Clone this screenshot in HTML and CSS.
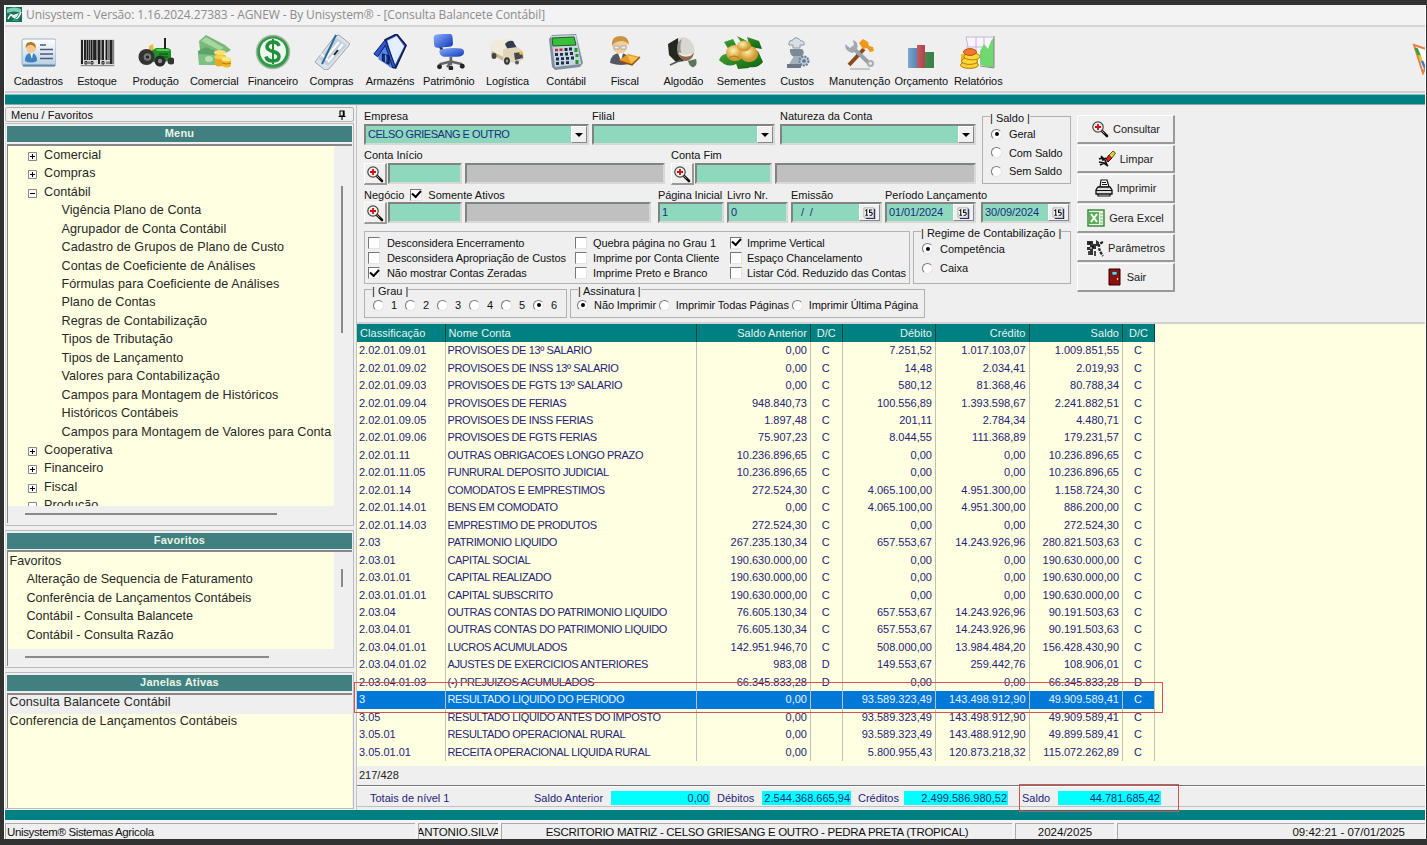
FILE: index.html
```html
<!DOCTYPE html>
<html lang="pt-BR">
<head>
<meta charset="utf-8">
<title>Unisystem - Consulta Balancete Contábil</title>
<link rel="stylesheet" href="styles.css">
</head>
<body>
<svg class="defs" width="0" height="0">
  <defs>
    <linearGradient id="gCard" x1="0" y1="0" x2="0" y2="1"><stop offset="0" stop-color="#ffffff"/><stop offset="1" stop-color="#b4d0e4"/></linearGradient>
    <linearGradient id="gBlue" x1="0" y1="0" x2="1" y2="1"><stop offset="0" stop-color="#8ab0ff"/><stop offset="1" stop-color="#1238b8"/></linearGradient>
    <radialGradient id="gGold" cx=".4" cy=".35"><stop offset="0" stop-color="#fff2b0"/><stop offset="1" stop-color="#d09a30"/></radialGradient>
    <linearGradient id="gLeaf" x1="0" y1="0" x2="1" y2="1"><stop offset="0" stop-color="#48a838"/><stop offset="1" stop-color="#0c6010"/></linearGradient>
    <linearGradient id="gBar" x1="0" y1="0" x2="1" y2="0"><stop offset="0" stop-color="#fff" stop-opacity=".35"/><stop offset="1" stop-color="#000" stop-opacity=".15"/></linearGradient>
    <symbol id="lens" viewBox="0 0 18 18"><path d="M11 11l5 5" stroke="#111" stroke-width="2.600" stroke-linecap="round"/><path d="M10.500 10.500l3 3" stroke="#b89860" stroke-width="1"/><circle cx="7" cy="7" r="5.200" fill="#f6eeee" stroke="#444" stroke-width="1.200"/><path d="M7 4v6M4 7h6" stroke="#d01010" stroke-width="1.800"/></symbol>
    <symbol id="cal" viewBox="0 0 14 13"><path d="M12.500 2v10.500H3" fill="none" stroke="#223070" stroke-width="1.400"/><path d="M1 1h10.500v10H1z" fill="#fff" stroke="#888" stroke-width=".7"/><path d="M2.500 4l1.500-1v6M2.500 9h3M10 3.300H7v2.500h2q1 .2 1 1.500t-1 1.700H7" fill="none" stroke="#111" stroke-width="1.200"/></symbol>
    <symbol id="plus" viewBox="0 0 9 9"><path d="M.5.5h8v8h-8z" fill="#fff" stroke="#888"/><path d="M2 4.500h5M4.500 2v5" stroke="#000"/></symbol>
    <symbol id="minus" viewBox="0 0 9 9"><path d="M.5.5h8v8h-8z" fill="#fff" stroke="#888"/><path d="M2 4.500h5" stroke="#000"/></symbol>
  </defs>
</svg>

<div class="window">
  <header class="titlebar">
    <svg class="app-icon" viewBox="0 0 16 15"><path d="M0 0h16v15H0z" fill="#16705c"/><path d="M1 2q7-3 14 0v4q-7-3-14 0z" fill="#7fd0b0"/><path d="M2 12q3-7 6-2t7-5" fill="none" stroke="#fff" stroke-width="1.500"/><path d="M3 6l4 2 6-2-2 4-4 1z" fill="#d8f4e8"/><path d="M9 11l5 3H6z" fill="#2ca05c"/></svg>
    <span>Unisystem - Versão: 1.16.2024.27383 - AGNEW - By Unisystem® - [Consulta Balancete Contábil]</span>
  </header>

  <nav class="toolbar">
    <div class="tool"><svg viewBox="0 0 36 36"><rect x="2" y="5" width="34" height="27" rx="2" fill="url(#gCard)" stroke="#9ab4c8"/><path d="M3 31.500h32" stroke="#6088a8" stroke-width="2"/><path d="M5 27q0-8 6-8t6 8q-6 3-12 0z" fill="#3c80c0"/><path d="M10 19l3 0-1 6z" fill="#fff"/><circle cx="11" cy="14" r="5" fill="#f4c890"/><path d="M5.500 14q0-7 6-6 5 1 4 6-3-4-6-3-2 0-4 3z" fill="#b87820"/><path d="M20 11h6M20 15.500h13M20 20h13M20 24.500h13" stroke="#557" stroke-width="1.600"/></svg><span>Cadastros</span></div>
    <div class="tool"><svg viewBox="0 0 36 36"><path d="M1 5h35v28H1z" fill="#dcdcdc"/><path d="M3 6v24M6 6v20M8.500 6v20M12.500 6v20M16 6v20M20 6v24M24 6v20M27.500 6v20M32 6v24" stroke="#1a1a1a" stroke-width="1.900"/><path d="M10.500 6v20M14.500 6v20M18 6v20M22 6v20M30 6v20M34 6v24" stroke="#333" stroke-width="1.100"/><path d="M6 30v-2.500h2V30zM10 27.500V30M12 30v-2.500h2V30zM23 30v-2.500h2V30zM28 27.500V30M30 27.500V30" fill="none" stroke="#222"/><path d="M2 31.500h33" stroke="#888"/></svg><span>Estoque</span></div>
    <div class="tool"><svg viewBox="0 0 36 36"><path d="M11 12l4-2 1 7-5 2z" fill="#e8b840"/><path d="M12 18l6-4h12l3 2v9l-6 3H15z" fill="#1f8f2a"/><path d="M18 15h12l2 2H19z" fill="#58c850"/><path d="M21 20h9M21 23h9" stroke="#0a5010"/><path d="M27 15V4" stroke="#222" stroke-width="2"/><circle cx="8.500" cy="23" r="8" fill="#333"/><circle cx="9.500" cy="23" r="3.800" fill="#777"/><circle cx="9.500" cy="23" r="1.600" fill="#222"/><circle cx="22" cy="27" r="5.500" fill="#2a2a2a"/><circle cx="22" cy="27" r="2.200" fill="#888"/><circle cx="33" cy="27" r="3.500" fill="#333"/></svg><span>Produção</span></div>
    <div class="tool"><svg viewBox="0 0 36 36"><path d="M3 7l7-6 19 10 6 5-7 4L4 16z" fill="#78b878"/><path d="M5 7l5-4 18 11-5 2z" fill="#a8d8a0"/><path d="M2 17l8-4 20 9-7 9H3z" fill="#5aa468"/><path d="M3 20l16 1v10H3z" fill="#7cc084"/><ellipse cx="13" cy="25" rx="4" ry="3" fill="#b8e0b0"/><path d="M19 18v13q4 3 8 0V18z" fill="#e8a820"/><path d="M26 24v8q5 3 9 0v-8z" fill="#f0b828"/><ellipse cx="24" cy="18.500" rx="6" ry="2.600" fill="#fce070"/><ellipse cx="24" cy="23" rx="6" ry="2.200" fill="#f8d050"/><ellipse cx="30.500" cy="25" rx="5" ry="2.300" fill="#fde880"/><path d="M26 29q5 2 9 0" stroke="#b07810" fill="none"/></svg><span>Comercial</span></div>
    <div class="tool"><svg viewBox="0 0 36 36"><circle cx="18" cy="18" r="16.500" fill="#2f9a48" stroke="#a0b8a0" stroke-width="1.500"/><circle cx="18" cy="17.500" r="13" fill="#f0f6f0"/><path d="M24 12q-1-4-6-4t-6 4.500q0 3.500 6 5t6 5q0 4.500-6 4.500t-7-4.500" fill="none" stroke="#20903a" stroke-width="3.500"/><path d="M18 5v25" stroke="#20903a" stroke-width="2"/></svg><span>Financeiro</span></div>
    <div class="tool"><svg viewBox="0 0 36 36"><path d="M1 28L21 2l4-1 11 9-21 25-4 1z" fill="#dce4ea" stroke="#9aa6b0"/><path d="M5 25L23 4l10 7-19 21z" fill="#c4d0d8"/><path d="M10 26l15-18M14 28l15-18M7 20l7 6" stroke="#f8fbfd" stroke-width="2"/><path d="M22 1L8 30" stroke="#2f6c98" stroke-width="2"/><path d="M20 21l4-5" stroke="#222" stroke-width="2"/></svg><span>Compras</span></div>
    <div class="tool"><svg viewBox="0 0 36 38"><path d="M13 6L25 0l10 12-11 24-6-2z" fill="#2450c8" stroke="#101840" stroke-width="1.600"/><path d="M15 7l10-5 8 11-10 20z" fill="#e4eefc"/><path d="M13 7l9 26-2 3-14-9-1-9z" fill="#5088f0"/><path d="M13 6L1 21l4 3 8-12 8 24 3-1z" fill="#2a58d8" stroke="#101840"/><path d="M10 21l7 2v9l-7-4z" fill="#123090" stroke="#0a1030"/><path d="M13.500 22v8" stroke="#a8c8ff"/></svg><span>Armazéns</span></div>
    <div class="tool"><svg viewBox="0 0 36 38"><path d="M8 12l5 9" stroke="#303848" stroke-width="3"/><rect x="2" y="0" width="20" height="14" rx="4" transform="rotate(-4 12 7)" fill="url(#gBlue)"/><path d="M8 17q8-3 20-2 6 0 6 4 0 5-8 5H12q-5-2-4-7z" fill="url(#gBlue)"/><path d="M20 24v9M20 29L8 32M20 29l12 3M20 30l-4 5" stroke="#666" stroke-width="2.800"/><circle cx="8" cy="34.500" r="2.600" fill="#222"/><circle cx="20" cy="36" r="2.500" fill="#222"/><circle cx="32" cy="34" r="2.600" fill="#222"/></svg><span>Patrimônio</span></div>
    <div class="tool"><svg viewBox="0 0 36 36"><path d="M1 12q0-4 5-6l14-1 4 2v19l-8 2L2 20z" fill="#f0ead8"/><path d="M3 17l13 7v4L2 20z" fill="#c8b890"/><path d="M16 10q3-4 8-3l4 7-9 2z" fill="#303c50"/><path d="M14 15l14-2 6 4 1 8-8 4-13-2z" fill="#e0d6bc"/><path d="M25 19l8-1 1 6-8 2z" fill="#45474c"/><ellipse cx="5" cy="22" rx="2.500" ry="3" fill="#444"/><ellipse cx="18" cy="27" rx="3" ry="3.700" fill="#333"/><ellipse cx="18" cy="27" rx="1.300" ry="1.700" fill="#999"/><circle cx="28" cy="28.500" r="2" fill="#555"/><circle cx="32" cy="19" r="1.800" fill="#fac040"/></svg><span>Logística</span></div>
    <div class="tool"><svg viewBox="0 0 36 36"><path d="M4 1l24-1 7 29-3 4-25 3-3-3L1 5z" fill="#8090a0"/><path d="M3 2l25-1 5 29-26 3z" fill="#c8d4e0"/><path d="M4 4l22-1 2 8-23 1z" fill="#38c038" stroke="#186020"/><path d="M7 16h3M11.500 15.800h3" stroke="#c03030" stroke-width="2.500"/><path d="M16.500 15.500h3M21 15h3M7 20.500h3M12 20.300h3M17 20h3M22 19.500h3M8 25h3M13 24.700h3M18 24.300h3M23 24h3M8 29.500h3M13 29h3M18 28.700h3" stroke="#1e2c48" stroke-width="2.800"/><path d="M28 14v4M29 20v3M29 26v4" stroke="#209830" stroke-width="3"/></svg><span>Contábil</span></div>
    <div class="tool"><svg viewBox="0 0 36 36"><path d="M3 29q1-10 10-10t11 10q-9 4-21 0z" fill="#505868"/><path d="M11 19h5l-2 8z" fill="#fff"/><circle cx="13" cy="12" r="7.500" fill="#f4cc9c"/><path d="M5 12q-1-10 8-10t9 9q-3-4-7-4-7 0-10 5z" fill="#c89440"/><path d="M7 12h5v3H7zM14 12h5v3h-5z" fill="#e8f0f4" stroke="#a0a0a0" stroke-width=".8"/><path d="M12 26l9-6 12 3-8 8z" fill="#e89820"/><path d="M20 21l12 3-8 5" fill="#f8c050"/><path d="M12 27l13 4 8-8" fill="none" stroke="#8c5010" stroke-width="1.400"/></svg><span>Fiscal</span></div>
    <div class="tool"><svg viewBox="0 0 36 36"><path d="M3 10l10-6 7 23-9 1-7-7z" fill="#25281f"/><path d="M13 5q6-4 12 1 6 7 4 14-3 8-10 7-6-5-6-22z" fill="#d8d8d0"/><path d="M17 5q-4 10 2 21-7-3-7-11t5-10z" fill="#9a9a92"/><path d="M13 17q7 8 16 2-2 8-9 8-5-1-7-10z" fill="#8c6a4c"/><path d="M14 19q6 5 13 1" fill="none" stroke="#f0e8d8" stroke-width="2"/><path d="M16 26L5 31" stroke="#555" stroke-width="1.500"/><path d="M23 27l8-2q2 5-2 8-4 1-6-6z" fill="#5c7458"/></svg><span>Algodão</span></div>
    <div class="tool tool-seeds"><svg viewBox="0 0 44 36"><path d="M5 8l9-3 4 8-8 3zM18 2l10 5-2 7zM28 3l12 4 3 8-12-2z" fill="url(#gLeaf)"/><path d="M0 26q3-8 14-6l6 8q-10 8-20-2zM15 24l13-5 2 15-11 1zM26 24l13-7 5 11q-6 8-18 4z" fill="url(#gLeaf)"/><ellipse cx="16" cy="19" rx="9" ry="8" fill="url(#gGold)"/><ellipse cx="30" cy="20" rx="9" ry="8" fill="url(#gGold)"/><ellipse cx="25" cy="12" rx="7" ry="5.500" fill="url(#gGold)"/><path d="M10 24q5-4 10 0" stroke="#a87020" fill="none"/></svg><span>Sementes</span></div>
    <div class="tool tool-costs"><svg viewBox="0 0 36 36"><path d="M10 9q0-3 4-3 1-3 4-2t4 3q4 0 3 4h-4v3h-7v-3h-4z" fill="#d8dfe4" stroke="#8c98a4"/><path d="M11 15h12q4 4-1 8h-7q-5-3-4-8z" fill="#7c8a98"/><path d="M15 22h7l3 10H9z" fill="#a4b0bc"/><path d="M8 30h14v4H8z" fill="#6c7884"/><circle cx="25" cy="27" r="4.500" fill="#c0cad4" stroke="#6c7c8c" stroke-width="2" stroke-dasharray="2 1"/><circle cx="25" cy="27" r="1.800" fill="#3878b8"/></svg><span>Custos</span></div>
    <div class="tool tool-maint"><svg viewBox="0 0 36 36"><path d="M8 35h20" stroke="#c8c8c8" stroke-width="2"/><path d="M7 31L22 15" stroke="#8a4a1c" stroke-width="4"/><path d="M17 9l4-4 5 3 1 4 4 1 1 4-4 1-3-4-4 1z" fill="#f0981c"/><path d="M10 13l18 17" stroke="#98a0a8" stroke-width="3.800"/><circle cx="28.500" cy="29.500" r="3.600" fill="#a8b0b6"/><circle cx="28.500" cy="29.500" r="1.400" fill="#eee"/><path d="M3 10l5 4 4-3-1-5q6 2 4 9l-4 4q-8-1-8-9z" fill="#a0a8b0"/></svg><span>Manutenção</span></div>
    <div class="tool tool-budget"><svg viewBox="0 0 36 36"><path d="M5 14h9v20H5z" fill="#3878b8"/><path d="M14 11h8v23h-8z" fill="#c84048"/><path d="M22 18h9v16h-9z" fill="#409850"/><path d="M5 14h9v20H5zM14 11h8v23h-8zM22 18h9v16h-9z" fill="url(#gBar)"/></svg><span>Orçamento</span></div>
    <div class="tool tool-reports"><svg viewBox="0 0 36 36"><path d="M6 3h27v30H14z" fill="#f8f6fc"/><path d="M6 3h27M6 3l2 10M16 3v20M24 3v10M6 13h20" stroke="#c4b4dc"/><path d="M20 17l4-7 4 5 3-8 3-4v31l-14-3z" fill="#70d870"/><path d="M34 2v32l-14-2" stroke="#888" fill="none"/><path d="M1 20v11q9 6 17 0V20z" fill="#f0b818"/><ellipse cx="9.500" cy="31" rx="9" ry="3.400" fill="#f8d030" stroke="#b87c08"/><ellipse cx="9.500" cy="27" rx="8" ry="3.400" fill="#ffd838" stroke="#b87c08"/><ellipse cx="12" cy="22.500" rx="8" ry="3.400" fill="#ffd838" stroke="#b87c08"/><ellipse cx="10" cy="18" rx="6.500" ry="3.400" fill="#f07830" stroke="#b85008"/></svg><span>Relatórios</span></div>
    <svg class="tool-cut" viewBox="0 0 13 32"><path d="M2 2L20 8 11 30z" fill="#fff" stroke="#e88040" stroke-width="2"/><path d="M4 5l4 9" stroke="#38a040" stroke-width="3"/><path d="M7 12l3 7" stroke="#e8c020" stroke-width="2.500"/><path d="M10 18l3 7" stroke="#3880d0" stroke-width="2.500"/></svg>
  </nav>
  <div class="teal-band"></div>

  <main class="workspace">
    <aside class="sidebar">
      <div class="dock-title"><span>Menu / Favoritos</span><svg viewBox="0 0 8 10"><path d="M2 1h4v5H2zM.5 6.500h7M4 7v3" fill="none" stroke="#000" stroke-width="1.100"/><path d="M5.500 1v5" stroke="#000" stroke-width="1.500"/></svg></div>

      <section class="panel panel-menu">
        <h2>Menu</h2>
        <div class="list-frame">
          <ul class="tree">
            <li><svg><use href="#plus"/></svg>Comercial</li>
            <li><svg><use href="#plus"/></svg>Compras</li>
            <li><svg><use href="#minus"/></svg>Contábil</li>
            <li class="leaf">Vigência Plano de Conta</li>
            <li class="leaf">Agrupador de Conta Contábil</li>
            <li class="leaf">Cadastro de Grupos de Plano de Custo</li>
            <li class="leaf">Contas de Coeficiente de Análises</li>
            <li class="leaf">Fórmulas para Coeficiente de Análises</li>
            <li class="leaf">Plano de Contas</li>
            <li class="leaf">Regras de Contabilização</li>
            <li class="leaf">Tipos de Tributação</li>
            <li class="leaf">Tipos de Lançamento</li>
            <li class="leaf">Valores para Contabilização</li>
            <li class="leaf">Campos para Montagem de Históricos</li>
            <li class="leaf">Históricos Contábeis</li>
            <li class="leaf">Campos para Montagem de Valores para Conta</li>
            <li><svg><use href="#plus"/></svg>Cooperativa</li>
            <li><svg><use href="#plus"/></svg>Financeiro</li>
            <li><svg><use href="#plus"/></svg>Fiscal</li>
            <li><svg><use href="#minus"/></svg>Produção</li>
          </ul>
          <div class="vscroll"><i></i></div>
          <div class="hscroll"><i></i></div>
        </div>
      </section>

      <section class="panel panel-fav">
        <h2>Favoritos</h2>
        <div class="list-frame">
          <ul class="tree fav">
            <li>Favoritos</li>
            <li class="leaf">Alteração de Sequencia de Faturamento</li>
            <li class="leaf">Conferência de Lançamentos Contábeis</li>
            <li class="leaf">Contábil - Consulta Balancete</li>
            <li class="leaf">Contábil - Consulta Razão</li>
          </ul>
          <div class="vscroll"><i></i></div>
          <div class="hscroll"><i></i></div>
        </div>
      </section>

      <section class="panel panel-win">
        <h2>Janelas Ativas</h2>
        <ul class="windows">
          <li class="active">Consulta Balancete Contábil</li>
          <li>Conferencia de Lançamentos Contábeis</li>
        </ul>
      </section>
    </aside>

    <section class="content">
      <div class="query">
        <form class="filters">
          <div class="top">
            <div class="stack">
              <div class="row row1">
                <label class="f f-emp">Empresa<span class="box"><b>CELSO GRIESANG E OUTRO</b><i class="arrow"></i></span></label>
                <label class="f f-fil">Filial<span class="box"><i class="arrow"></i></span></label>
                <label class="f f-nat">Natureza da Conta<span class="box"><i class="arrow"></i></span></label>
              </div>
              <div class="row row2">
                <div class="f f-ci">Conta Início<div class="lookup"><span class="lens"><svg><use href="#lens"/></svg></span><span class="box"></span><span class="box gray"></span></div></div>
                <div class="f f-cf">Conta Fim<div class="lookup"><span class="lens"><svg><use href="#lens"/></svg></span><span class="box"></span><span class="box gray"></span></div></div>
              </div>
            </div>
            <fieldset class="g-saldo"><legend>| Saldo |</legend>
              <label><i class="radio on"></i>Geral</label>
              <label><i class="radio"></i>Com Saldo</label>
              <label><i class="radio"></i>Sem Saldo</label>
            </fieldset>
          </div>

          <div class="row row3">
            <div class="f f-neg"><div class="neg-label">Negócio<i class="check on"></i>Somente Ativos</div><div class="lookup"><span class="lens"><svg><use href="#lens"/></svg></span><span class="box"></span><span class="box gray"></span></div></div>
            <label class="f f-pag">Página Inicial<span class="box"><b>1</b></span></label>
            <label class="f f-liv">Livro Nr.<span class="box"><b>0</b></span></label>
            <label class="f f-emi">Emissão<span class="box"><b>&nbsp; / &nbsp;/</b><i class="cal"><svg><use href="#cal"/></svg></i></span></label>
            <label class="f f-per">Período Lançamento<span class="box"><b>01/01/2024</b><i class="cal"><svg><use href="#cal"/></svg></i></span></label>
            <label class="f f-fim">&nbsp;<span class="box"><b>30/09/2024</b><i class="cal"><svg><use href="#cal"/></svg></i></span></label>
          </div>

          <div class="row row4">
            <div class="checks">
              <label><i class="check"></i>Desconsidera Encerramento</label>
              <label><i class="check"></i>Quebra página no Grau 1</label>
              <label><i class="check on"></i>Imprime Vertical</label>
              <label><i class="check"></i>Desconsidera Apropriação de Custos</label>
              <label><i class="check"></i>Imprime por Conta Cliente</label>
              <label><i class="check"></i>Espaço Chancelamento</label>
              <label><i class="check on"></i>Não mostrar Contas Zeradas</label>
              <label><i class="check"></i>Imprime Preto e Branco</label>
              <label><i class="check"></i>Listar Cód. Reduzido das Contas</label>
            </div>
            <fieldset class="g-regime"><legend>| Regime de Contabilização |</legend>
              <label><i class="radio on"></i>Competência</label>
              <label><i class="radio"></i>Caixa</label>
            </fieldset>
          </div>

          <div class="row row5">
            <fieldset class="g-grau"><legend>| Grau |</legend>
              <label><i class="radio"></i>1</label><label><i class="radio"></i>2</label><label><i class="radio"></i>3</label><label><i class="radio"></i>4</label><label><i class="radio"></i>5</label><label><i class="radio on"></i>6</label>
            </fieldset>
            <fieldset class="g-ass"><legend>| Assinatura |</legend>
              <label><i class="radio on"></i>Não Imprimir</label>
              <label><i class="radio"></i>Imprimir Todas Páginas</label>
              <label><i class="radio"></i>Imprimir Última Página</label>
            </fieldset>
          </div>
        </form>

        <div class="actions">
          <button><svg viewBox="0 0 18 18"><use href="#lens"/></svg>Consultar</button>
          <button><svg viewBox="0 0 18 18"><path d="M1 9l3-1 1 2 3-2M1 12l5 1M2 15l4-2 4 3M3 6l3 3M7 10l2 5" stroke="#111" stroke-width="1.700" fill="none"/><path d="M8 9l3-4 3 3-4 4z" fill="#d82020" stroke="#400"/><path d="M11 5l4-4 2.500 2L14 8z" fill="#f0c830" stroke="#553"/></svg>Limpar</button>
          <button><svg viewBox="0 0 18 18"><path d="M5 8L6 1h6l2 7z" fill="#fff" stroke="#111" stroke-width="1.200"/><path d="M7 3.500h4M7 5.500h5" stroke="#111"/><path d="M3 8h12l2 3v4H1v-4z" fill="#ddd" stroke="#111" stroke-width="1.300"/><path d="M1 11.500h16M3 15v2h12v-2" stroke="#111" fill="none" stroke-width="1.200"/></svg>Imprimir</button>
          <button><svg viewBox="0 0 18 18"><path d="M1 1h16v16H1z" fill="#e8f4e4" stroke="#3c8a3c" stroke-width="1.500"/><path d="M2 3h10v12H2z" fill="#5cae58"/><path d="M4 5l6 8M10 5l-6 8" stroke="#fff" stroke-width="2"/><path d="M13 5h3M13 8h3M13 11h3M13 14h3" stroke="#7cb878"/></svg>Gera Excel</button>
          <button><svg viewBox="0 0 18 18"><path d="M1 2h6v3h3V1l3 2v4h-3v3H7v6H4v-5H1V8h3V6H1z" fill="#333"/><path d="M3 4h2M6 8h2M3 12v4M9 12v5" stroke="#111" stroke-width="1.500"/><path d="M17 3q-5 2-4 6t4 8" fill="none" stroke="#222" stroke-width="2.200" stroke-dasharray="3 1"/><path d="M4 9h2M8 3h1M12 8l2 1" stroke="#fff"/></svg>Parâmetros</button>
          <button><svg viewBox="0 0 18 18"><path d="M4 1h11v16H4z" fill="#901010" stroke="#300"/><path d="M7 3.500h5V7H7z" fill="#58e0e8" stroke="#222" stroke-width=".7"/><path d="M12.500 10v2" stroke="#f0d040" stroke-width="1.300"/></svg>Sair</button>
        </div>
      </div>

      <div class="grid-area">
        <table class="grid">
          <colgroup><col class="c-cls"><col class="c-nom"><col class="c-ant"><col class="c-dc1"><col class="c-val"><col class="c-val"><col class="c-val"><col class="c-dc2"></colgroup>
          <thead><tr><th>Classificação</th><th>Nome Conta</th><th>Saldo Anterior</th><th>D/C</th><th>Débito</th><th>Crédito</th><th>Saldo</th><th>D/C</th></tr></thead>
          <tbody>
            <tr><td>2.02.01.09.01<td>PROVISOES DE 13º SALARIO<td>0,00<td>C<td>7.251,52<td>1.017.103,07<td>1.009.851,55<td>C</tr>
            <tr><td>2.02.01.09.02<td>PROVISOES DE INSS 13º SALARIO<td>0,00<td>C<td>14,48<td>2.034,41<td>2.019,93<td>C</tr>
            <tr><td>2.02.01.09.03<td>PROVISOES DE FGTS 13º SALARIO<td>0,00<td>C<td>580,12<td>81.368,46<td>80.788,34<td>C</tr>
            <tr><td>2.02.01.09.04<td>PROVISOES DE FERIAS<td>948.840,73<td>C<td>100.556,89<td>1.393.598,67<td>2.241.882,51<td>C</tr>
            <tr><td>2.02.01.09.05<td>PROVISOES DE INSS FERIAS<td>1.897,48<td>C<td>201,11<td>2.784,34<td>4.480,71<td>C</tr>
            <tr><td>2.02.01.09.06<td>PROVISOES DE FGTS FERIAS<td>75.907,23<td>C<td>8.044,55<td>111.368,89<td>179.231,57<td>C</tr>
            <tr><td>2.02.01.11<td>OUTRAS OBRIGACOES LONGO PRAZO<td>10.236.896,65<td>C<td>0,00<td>0,00<td>10.236.896,65<td>C</tr>
            <tr><td>2.02.01.11.05<td>FUNRURAL DEPOSITO JUDICIAL<td>10.236.896,65<td>C<td>0,00<td>0,00<td>10.236.896,65<td>C</tr>
            <tr><td>2.02.01.14<td>COMODATOS E EMPRESTIMOS<td>272.524,30<td>C<td>4.065.100,00<td>4.951.300,00<td>1.158.724,30<td>C</tr>
            <tr><td>2.02.01.14.01<td>BENS EM COMODATO<td>0,00<td>C<td>4.065.100,00<td>4.951.300,00<td>886.200,00<td>C</tr>
            <tr><td>2.02.01.14.03<td>EMPRESTIMO DE PRODUTOS<td>272.524,30<td>C<td>0,00<td>0,00<td>272.524,30<td>C</tr>
            <tr><td>2.03<td>PATRIMONIO LIQUIDO<td>267.235.130,34<td>C<td>657.553,67<td>14.243.926,96<td>280.821.503,63<td>C</tr>
            <tr><td>2.03.01<td>CAPITAL SOCIAL<td>190.630.000,00<td>C<td>0,00<td>0,00<td>190.630.000,00<td>C</tr>
            <tr><td>2.03.01.01<td>CAPITAL REALIZADO<td>190.630.000,00<td>C<td>0,00<td>0,00<td>190.630.000,00<td>C</tr>
            <tr><td>2.03.01.01.01<td>CAPITAL SUBSCRITO<td>190.630.000,00<td>C<td>0,00<td>0,00<td>190.630.000,00<td>C</tr>
            <tr><td>2.03.04<td>OUTRAS CONTAS DO PATRIMONIO LIQUIDO<td>76.605.130,34<td>C<td>657.553,67<td>14.243.926,96<td>90.191.503,63<td>C</tr>
            <tr><td>2.03.04.01<td>OUTRAS CONTAS DO PATRIMONIO LIQUIDO<td>76.605.130,34<td>C<td>657.553,67<td>14.243.926,96<td>90.191.503,63<td>C</tr>
            <tr><td>2.03.04.01.01<td>LUCROS ACUMULADOS<td>142.951.946,70<td>C<td>508.000,00<td>13.984.484,20<td>156.428.430,90<td>C</tr>
            <tr><td>2.03.04.01.02<td>AJUSTES DE EXERCICIOS ANTERIORES<td>983,08<td>D<td>149.553,67<td>259.442,76<td>108.906,01<td>C</tr>
            <tr><td>2.03.04.01.03<td>(-) PREJUIZOS ACUMULADOS<td>66.345.833,28<td>D<td>0,00<td>0,00<td>66.345.833,28<td>D</tr>
            <tr class="selected"><td>3<td>RESULTADO LIQUIDO DO PERIODO<td>0,00<td><td>93.589.323,49<td>143.498.912,90<td>49.909.589,41<td>C</tr>
            <tr><td>3.05<td>RESULTADO LIQUIDO ANTES DO IMPOSTO<td>0,00<td><td>93.589.323,49<td>143.498.912,90<td>49.909.589,41<td>C</tr>
            <tr><td>3.05.01<td>RESULTADO OPERACIONAL RURAL<td>0,00<td><td>93.589.323,49<td>143.488.912,90<td>49.899.589,41<td>C</tr>
            <tr><td>3.05.01.01<td>RECEITA OPERACIONAL LIQUIDA RURAL<td>0,00<td><td>5.800.955,43<td>120.873.218,32<td>115.072.262,89<td>C</tr>
          </tbody>
        </table>
        <div class="mark mark-row"></div>
      </div>
      <div class="counter">217/428</div>
      <div class="totals">
        <span class="t-level">Totais de nível 1</span>
        <span class="t-ant">Saldo Anterior</span><b class="v-ant">0,00</b>
        <span class="t-deb">Débitos</span><b class="v-deb">2.544.368.665,94</b>
        <span class="t-cre">Créditos</span><b class="v-cre">2.499.586.980,52</b>
        <span class="t-sal">Saldo</span><b class="v-sal">44.781.685,42</b>
        <div class="mark mark-total"></div>
      </div>
    </section>
  </main>

  <div class="teal-band low"></div>
  <footer class="status">
    <span class="s1">Unisystem® Sistemas Agricola</span>
    <span class="s2"><em>ANTONIO.SILVA</em></span>
    <span class="s3">ESCRITORIO MATRIZ - CELSO GRIESANG E OUTRO - PEDRA PRETA (TROPICAL)</span>
    <span class="s4">2024/2025</span>
    <span class="s5">09:42:21 - 07/01/2025</span>
  </footer>
</div>
</body>
</html>
```

FILE: styles.css
```css
* { box-sizing: border-box; }
body { margin: 0; width: 1427px; height: 845px; overflow: hidden; padding: 5px 1px 6px 4px; background: #333232; font-family: "Liberation Sans", Arial, sans-serif; font-size: 11px; color: #111; }
.defs { position: absolute; }
i, em { font-style: normal; }
ul { list-style: none; margin: 0; padding: 0; }
.window { width: 1422px; height: 834px; background: #efefef; border-left: 1px solid #fff; border-right: 1px solid #fff; overflow: hidden; display: flex; flex-direction: column; }

.titlebar { height: 20px; flex: none; display: flex; align-items: center; gap: 4px; padding: 0 0 2px 1px; background: #f3f3f3; color: #8c8c8c; font: 12px "Open Sans", "Noto Sans", sans-serif; letter-spacing: -.11px; white-space: nowrap; }
.app-icon { width: 16px; height: 15px; }

.toolbar { height: 68px; flex: none; display: flex; padding: 7px 0 0 4px; border-top: 2px solid #d4d4d4; border-bottom: 2px solid #cfcfcf; }
.tool { width: 58.65px; flex: none; display: flex; flex-direction: column; align-items: center; gap: 4px; white-space: nowrap; line-height: 14px; }
.tool svg { width: 36px; height: 36px; }
.tool span { letter-spacing: -.1px; }
.tool-seeds { width: 57px; }
.tool-seeds svg { width: 44px; }
.tool-costs { width: 54.6px; }
.tool-maint { width: 71px; }
.tool-maint span { letter-spacing: .1px; }
.tool-budget { width: 52px; }
.tool-reports { width: 62px; }
.tool-cut { width: 13px; height: 32px; margin: 9px 0 0 auto; }
.teal-band { height: 11px; flex: none; margin-top: 1px; background: #008080; border-top: 1px solid #7cc4c4; border-bottom: 1px solid #8fa8a8; }
.teal-band.low { height: 10px; margin-top: 0; border: 0; }

.workspace { height: 705px; flex: none; display: flex; }

/* Sidebar */
.sidebar { width: 349px; flex: none; display: flex; flex-direction: column; padding-top: 2px; }
.dock-title { height: 15px; border: 1px solid #b4b4b4; border-radius: 2px; display: flex; align-items: center; justify-content: space-between; padding: 0 7px 0 5px; }
.dock-title svg { width: 8px; height: 10px; }
.panel { border: 1px solid #bcbcbc; border-left-color: #ddd; padding: 2px 1px 0; }
.panel h2 { margin: 0; height: 16px; background: #408080; color: #e8f4e4; font-size: 11px; line-height: 15px; text-align: center; letter-spacing: .2px; }
.panel-menu { height: 403px; margin-top: 1px; }
.panel-fav { height: 138px; margin-top: 4px; }
.panel-win { height: 137px; margin-top: 4px; }
.list-frame { border-left: 1px solid #888; border-top: 2px solid #888; margin-top: 2px; display: grid; grid-template-columns: 326px 1fr; }
.tree { background: #ffffe1; overflow: hidden; height: 360px; font-size: 12.6px; letter-spacing: .06px; line-height: 18.5px; color: #282828; white-space: nowrap; }
.tree li { height: 18.45px; padding-left: 20px; display: flex; align-items: center; }
.tree svg { width: 9px; height: 9px; margin: 2px 7px 0 0; }
.tree li.leaf { padding-left: 53.5px; }
.tree.fav { height: 97px; letter-spacing: 0; }
.tree.fav li { padding-left: 1.500px; }
.tree.fav li.leaf { padding-left: 18.500px; }
.vscroll i { display: block; width: 2px; margin-left: 7px; background: #8a8a8a; }
.hscroll { grid-column: 1 / 3; height: 17px; padding: 7px 0 0 17px; }
.hscroll i { display: block; height: 2px; background: #8a8a8a; }
.panel-menu .vscroll i { height: 147px; margin-top: 40px; }
.panel-menu .hscroll i { width: 252px; }
.panel-fav .list-frame { margin-top: 1px; }
.panel-fav .vscroll i { height: 18px; margin-top: 17px; }
.panel-fav .hscroll i { width: 244px; }
.windows { margin-top: 2px; height: 115px; background: #ffffe1; border-left: 1px solid #888; border-top: 2px solid #888; font-size: 12.6px; letter-spacing: .08px; line-height: 18.5px; color: #282828; }
.windows li { padding-left: 1.500px; height: 18.5px; line-height: 15.500px; }
.windows .active { background: #efefef; }

/* Query form */
.content { margin-left: 2px; flex: 1; min-width: 0; border-left: 1px solid #c4c4c4; display: flex; flex-direction: column; }
.query { height: 219px; flex: none; display: flex; border-bottom: 2px solid #d2d2d2; }
.filters { width: 714px; padding: 5px 0 0 7px; flex: none; }
.top { display: flex; height: 79px; }
.stack { width: 613px; flex: none; }
.row { display: flex; }
.f { display: block; line-height: 13px; white-space: nowrap; }
.box { display: flex; justify-content: space-between; align-items: center; height: 21px; margin-top: 1px; background: #8ed8be; border: 2px solid; border-color: #7e8482 #d8d8d8 #d8d8d8 #7e8482; color: #18307c; }
.box b { font-weight: normal; padding-left: 2px; letter-spacing: -.1px; }
.box.gray { background: #c0c0c0; }
.arrow { width: 16px; height: 17px; background: #f0f0f0; border: 1px solid; border-color: #fff #888 #888 #fff; margin-left: auto; display: grid; place-items: center; }
.arrow::before { content: ""; border: 4px solid transparent; border-bottom: 0; border-top: 4px solid #000; }
.cal { width: 21px; height: 17px; background: #f0f0f0; border: 1px solid; border-color: #fff #888 #888 #fff; margin-left: auto; display: grid; place-items: center; }
.cal svg { width: 13px; height: 12px; }
.row1 { height: 39px; }
.f-emp { width: 225px; margin-right: 3px; }
.f-emp b { letter-spacing: -.46px; }
.f-fil { width: 183px; margin-right: 5px; }
.f-nat { width: 196px; }
.lookup { display: flex; margin-top: 1px; }
.lookup .box { width: 74px; margin: 0 3px 0 1px; height: 21px; }
.lookup .gray { width: 200px; margin: 0; }
.lens { width: 23px; height: 22px; background: #f0f0f0; border: 1px solid; border-color: #fff #999 #999 #fff; border-right-width: 2px; border-bottom-width: 2px; display: grid; place-items: center; }
.lens svg { width: 18px; height: 18px; }
.f-ci { width: 307px; }
.f-cf .box { width: 77px; }
.f-cf .gray { width: 201px; }
.row3 { height: 42px; }
.f-neg { width: 294px; }
.neg-label { display: flex; align-items: center; height: 13px; }
.neg-label .check { margin: 0 6px 2px 6px; }
.f-neg .lookup { margin-top: 0; }
.f-neg .gray { width: 186px; }
.row3 .box { margin-top: 0; }
.f-pag { width: 66px; margin-right: 3px; letter-spacing: -.1px; }
.f-liv { width: 61px; margin-right: 3px; }
.f-emi { width: 91px; margin-right: 3px; }
.f-per { width: 91px; margin-right: 5px; }
.f-fim { width: 90px; }
fieldset { margin: 0; padding: 0; border: 1px solid #b0b0b0; min-width: 0; white-space: nowrap; }
legend { padding: 0; margin-left: 7px; line-height: 16px; height: 12px; }
fieldset label, .checks label { display: flex; align-items: center; white-space: nowrap; }
.radio { width: 11px; height: 11px; flex: none; border-radius: 50%; background: #fff; border: 1px solid; border-color: #777 #e4e4e4 #e4e4e4 #777; display: grid; place-items: center; }
.radio.on::before { content: ""; width: 4px; height: 4px; border-radius: 50%; background: #000; }
.check { width: 12px; height: 12px; flex: none; background: #fff; border: 1px solid; border-color: #777 #e4e4e4 #e4e4e4 #777; display: grid; place-items: center; }
.check.on::before { content: ""; width: 7px; height: 4px; margin-top: -3px; border: solid #000; border-width: 0 0 2px 2px; transform: rotate(-48deg); }
.g-saldo { width: 89px; height: 74px; margin-left: 5px; }
.g-saldo legend { margin-bottom: 3px; }
.g-saldo label { height: 18.6px; padding-left: 8px; gap: 7px; letter-spacing: -.1px; }
.row4 { height: 52px; }
.checks { width: 546px; height: 53px; flex: none; border: 1px solid #b4b4b4; display: grid; grid-template-columns: 207px 155px 1fr; grid-auto-rows: 15.4px; padding: 3px 0 0 3px; }
.checks label { gap: 7px; letter-spacing: -.08px; }
.checks label:nth-child(3n+2) { gap: 6px; }
.checks label:nth-child(3n) { gap: 5px; }
.g-regime { width: 158px; height: 59px; margin: -6px 0 0 3px; }
.g-regime legend { margin-bottom: 2px; }
.g-regime label { height: 19.500px; padding-left: 8px; gap: 7px; }
.g-grau { width: 203px; height: 35px; }
.g-ass { width: 355px; height: 35px; margin-left: 3px; }
.g-grau label, .g-ass label { display: inline-flex; height: 20px; vertical-align: top; }
.g-grau label { width: 32px; gap: 7px; }
.g-grau label:first-of-type { margin-left: 8px; }
.g-ass { word-spacing: -.3px; }
.g-ass label { gap: 6px; margin-left: 6px; letter-spacing: -.05px; }
.g-ass label + label { margin-left: 0; }

.actions { width: 98px; margin: 10px 0 0 6px; display: flex; flex-direction: column; gap: 1px; }
.actions button { height: 28.700px; flex: none; padding: 0; display: flex; align-items: center; justify-content: center; gap: 4px; background: #f0f0f0; border: 1px solid; border-color: #fff #999 #999 #fff; border-right-width: 2px; border-bottom-width: 2px; font: 11px "Liberation Sans", Arial, sans-serif; color: #222; }
.actions svg { width: 18px; height: 18px; }

/* Grid */
.grid-area { height: 442px; flex: none; background: #ffffe1; position: relative; }
.grid { border-collapse: separate; border-spacing: 0; table-layout: fixed; width: 798px; color: #242478; }
.c-cls { width: 88.500px; } .c-nom { width: 251px; } .c-ant { width: 114.500px; } .c-dc1 { width: 31.500px; } .c-val { width: 93.500px; } .c-dc2 { width: 32px; }
.grid th { height: 18px; padding: 0 3px; background: #008080; color: #e4f4f0; font-weight: normal; text-align: left; border-right: 1px solid #044; letter-spacing: .05px; line-height: 18px; }
.grid td { height: 17.460px; padding: 0 3px 0 2px; line-height: 17px; border-right: 1px solid #c0c0b8; white-space: nowrap; }
.grid td:nth-child(2) { letter-spacing: -.38px; }
.grid th:nth-child(n+3), .grid td:nth-child(n+3) { text-align: right; }
.grid th:nth-child(4), .grid td:nth-child(4), .grid th:nth-child(8), .grid td:nth-child(8) { text-align: center; }
.grid .selected td { background: #0078d7; color: #e8f2fc; }
.mark { position: absolute; z-index: 2; border: 1px solid #dc5050; }
.mark-row { left: -3px; top: 358px; width: 809px; height: 31px; }
.counter { height: 20px; flex: none; padding-left: 2px; line-height: 19px; border-bottom: 1px solid #777; color: #222; }
.totals { height: 21px; flex: none; display: flex; align-items: center; padding: 2px 0 0 13px; border-top: 1px solid #fff; border-bottom: 1px solid #c0c0c0; color: #242478; position: relative; white-space: nowrap; }
.totals b { font-weight: normal; height: 14px; line-height: 14px; background: #00ffff; text-align: right; padding-right: 1px; color: #10307c; }
.t-level { width: 164px; } .t-ant { width: 77px; } .v-ant { width: 99px; }
.t-deb { width: 52px; padding-left: 7px; } .v-deb { width: 89px; }
.t-cre { width: 53px; padding-left: 7px; } .v-cre { width: 104px; }
.t-sal { width: 50px; padding-left: 14px; } .v-sal { width: 103px; }
.mark-total { left: 662px; top: -3px; width: 160px; height: 28px; }

/* Status bar */
.status { flex: 1; display: flex; align-items: stretch; padding-top: 3px; font-size: 11.500px; line-height: 16px; white-space: nowrap; background: #f4f4f4; gap: 3px; }
.status span { border-top: 1px solid #aaa; border-left: 1px solid #aaa; background: #efefef; overflow: hidden; }
.s1 { width: 410px; padding-left: 1px; letter-spacing: -.36px; }
.s2 { width: 80px; display: flex; justify-content: center; letter-spacing: -.2px; }
.s3 { width: 511px; text-align: center; letter-spacing: -.3px; }
.s4 { width: 99px; text-align: center; }
.s5 { flex: 1; text-align: right; padding-right: 20px; }
```
